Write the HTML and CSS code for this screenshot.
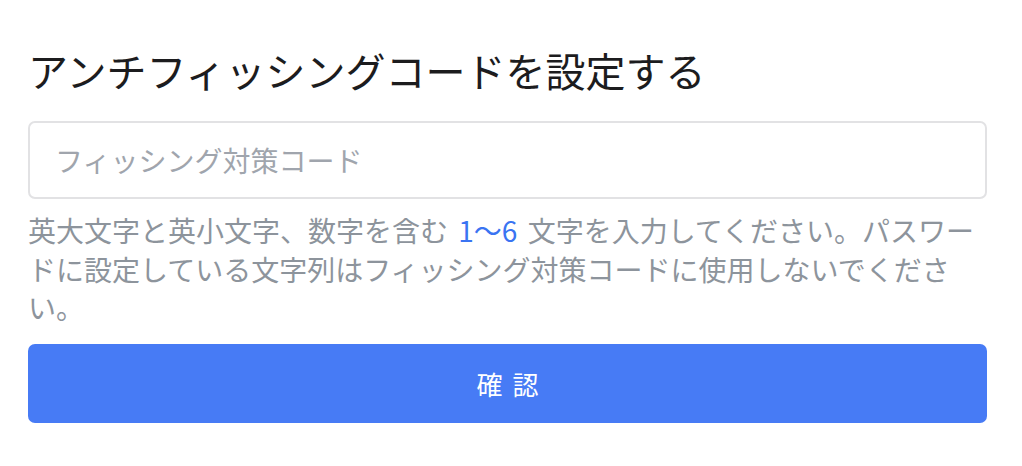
FILE: index.html
```html
<!DOCTYPE html>
<html lang="ja">
<head>
    <meta charset="UTF-8">
    <meta name="viewport" content="width=device-width, initial-scale=1.0">
    <title>アンチフィッシングコードを設定する</title>
    <link rel="stylesheet" href="styles.css">
</head>
<body>
    <div class="form-container">
        <h1 class="title">アンチフィッシングコードを設定する</h1>
        <input class="code-input" type="text" placeholder="フィッシング対策コード">
        <p class="hint">英大文字と英小文字、数字を含む <span class="accent">1〜6</span> 文字を入力してください。パスワードに設定している文字列はフィッシング対策コードに使用しないでください。</p>
        <button class="confirm">確認</button>
    </div>
</body>
</html>
```

FILE: styles.css
```css
body {
    margin: 0;
    background-color: #fff;
    font-family: "Noto Sans CJK JP", "Noto Sans", sans-serif;
}
.form-container {
    display: flex;
    flex-direction: column;
    padding: 42px 35px 0 28px;
}
.title {
    margin: 0;
    font-size: 40px;
    font-weight: 400;
    line-height: 56px;
    color: #1c1c1e;
}
.code-input {
    margin-top: 23px;
    height: 78px;
    box-sizing: border-box;
    border: 2px solid #e2e2e4;
    border-radius: 7px;
    padding: 0 25px;
    font-family: inherit;
    font-size: 28px;
    color: #222;
    outline: none;
}
.code-input::placeholder {
    color: #a0a5ad;
}
.hint {
    margin: 12px 0 0;
    font-size: 28px;
    line-height: 38.5px;
    color: #8d949c;
    word-spacing: 4px;
}
.accent {
    color: #3a74f2;
}
.confirm {
    margin-top: 17px;
    height: 79px;
    border: none;
    border-radius: 7px;
    background-color: #477bf5;
    color: #fff;
    font-family: inherit;
    font-size: 26px;
    letter-spacing: 10px;
    padding: 0 0 0 10px;
    cursor: pointer;
}
```
